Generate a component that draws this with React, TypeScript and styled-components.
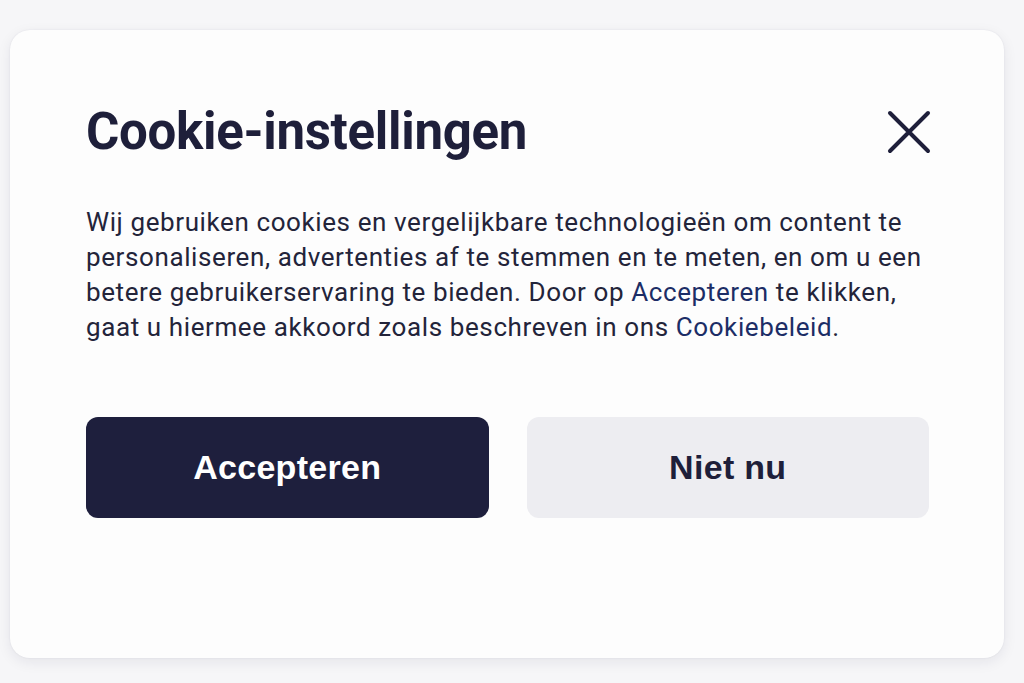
import React from "react";
import styled, { createGlobalStyle } from "styled-components";

const GlobalStyle = createGlobalStyle`
  html, body {
    margin: 0;
    padding: 0;
    background: #f6f6f8;
  }
  body {
    font-family: Roboto, "Liberation Sans", Arial, sans-serif;
    color: #1e1f3a;
  }
`;

// 쿠키 설정 다이얼로그
const App: React.FC = () => {
  return (
    <>
      <GlobalStyle />
      <Page>
        <Card role="dialog" aria-labelledby="cookie-title">
          <Header>
            <Title id="cookie-title">Cookie-instellingen</Title>
            <CloseButton aria-label="Sluiten">
              <svg width="44" height="44" viewBox="0 0 44 44" fill="none">
                <path
                  d="M3 3 L41 41 M41 3 L3 41"
                  stroke="#1e1f3a"
                  strokeWidth="4"
                  strokeLinecap="round"
                />
              </svg>
            </CloseButton>
          </Header>

          <Description>
            Wij gebruiken cookies en vergelijkbare technologieën om content te
            personaliseren, advertenties af te stemmen en te meten, en om u een
            betere gebruikerservaring te bieden. Door op{" "}
            <TextLink href="#">Accepteren</TextLink> te klikken, gaat u hiermee
            akkoord zoals beschreven in ons{" "}
            <TextLink href="#">Cookiebeleid</TextLink>.
          </Description>

          <Actions>
            <ActionButton variant="primary">Accepteren</ActionButton>
            <ActionButton variant="secondary">Niet nu</ActionButton>
          </Actions>
        </Card>
      </Page>
    </>
  );
};

export default App;

// 전체 페이지
const Page = styled.div`
  width: 1024px;
  height: 683px;
  box-sizing: border-box;
  padding: 30px 20px 25px 10px;
  display: flex;
`;

// 카드
const Card = styled.div`
  flex: 1;
  background: #fdfdfd;
  border-radius: 20px;
  box-shadow: 0 4px 14px rgba(30, 31, 58, 0.08), 0 0 2px rgba(30, 31, 58, 0.08);
  padding: 71px 75px 0 76px;
  display: flex;
  flex-direction: column;
`;

const Header = styled.div`
  display: flex;
  align-items: center;
  justify-content: space-between;
`;

const Title = styled.h1`
  margin: 0;
  font-size: 51px;
  line-height: 62px;
  font-weight: 700;
  letter-spacing: -0.3px;
  color: #1e1f3a;
`;

const CloseButton = styled.button`
  border: none;
  background: transparent;
  padding: 0;
  margin-right: -2px;
  width: 44px;
  height: 44px;
  display: flex;
  cursor: pointer;
`;

const Description = styled.p`
  margin: 42px 0 0;
  font-size: 26px;
  line-height: 35px;
  letter-spacing: 0.6px;
  color: #23243a;
`;

const TextLink = styled.a`
  color: #1c2d66;
  text-decoration: none;
`;

const Actions = styled.div`
  margin-top: 72px;
  display: grid;
  grid-template-columns: 1fr 1fr;
  gap: 38px;
`;

const ActionButton = styled.button<{ variant: "primary" | "secondary" }>`
  height: 101px;
  border: none;
  border-radius: 12px;
  font-family: "Liberation Sans", Arial, sans-serif;
  font-size: 34px;
  font-weight: 700;
  letter-spacing: 0.3px;
  cursor: pointer;
  background: ${(p) => (p.variant === "primary" ? "#1e1f3d" : "#ededf1")};
  color: ${(p) => (p.variant === "primary" ? "#ffffff" : "#1e1f3a")};
`;
